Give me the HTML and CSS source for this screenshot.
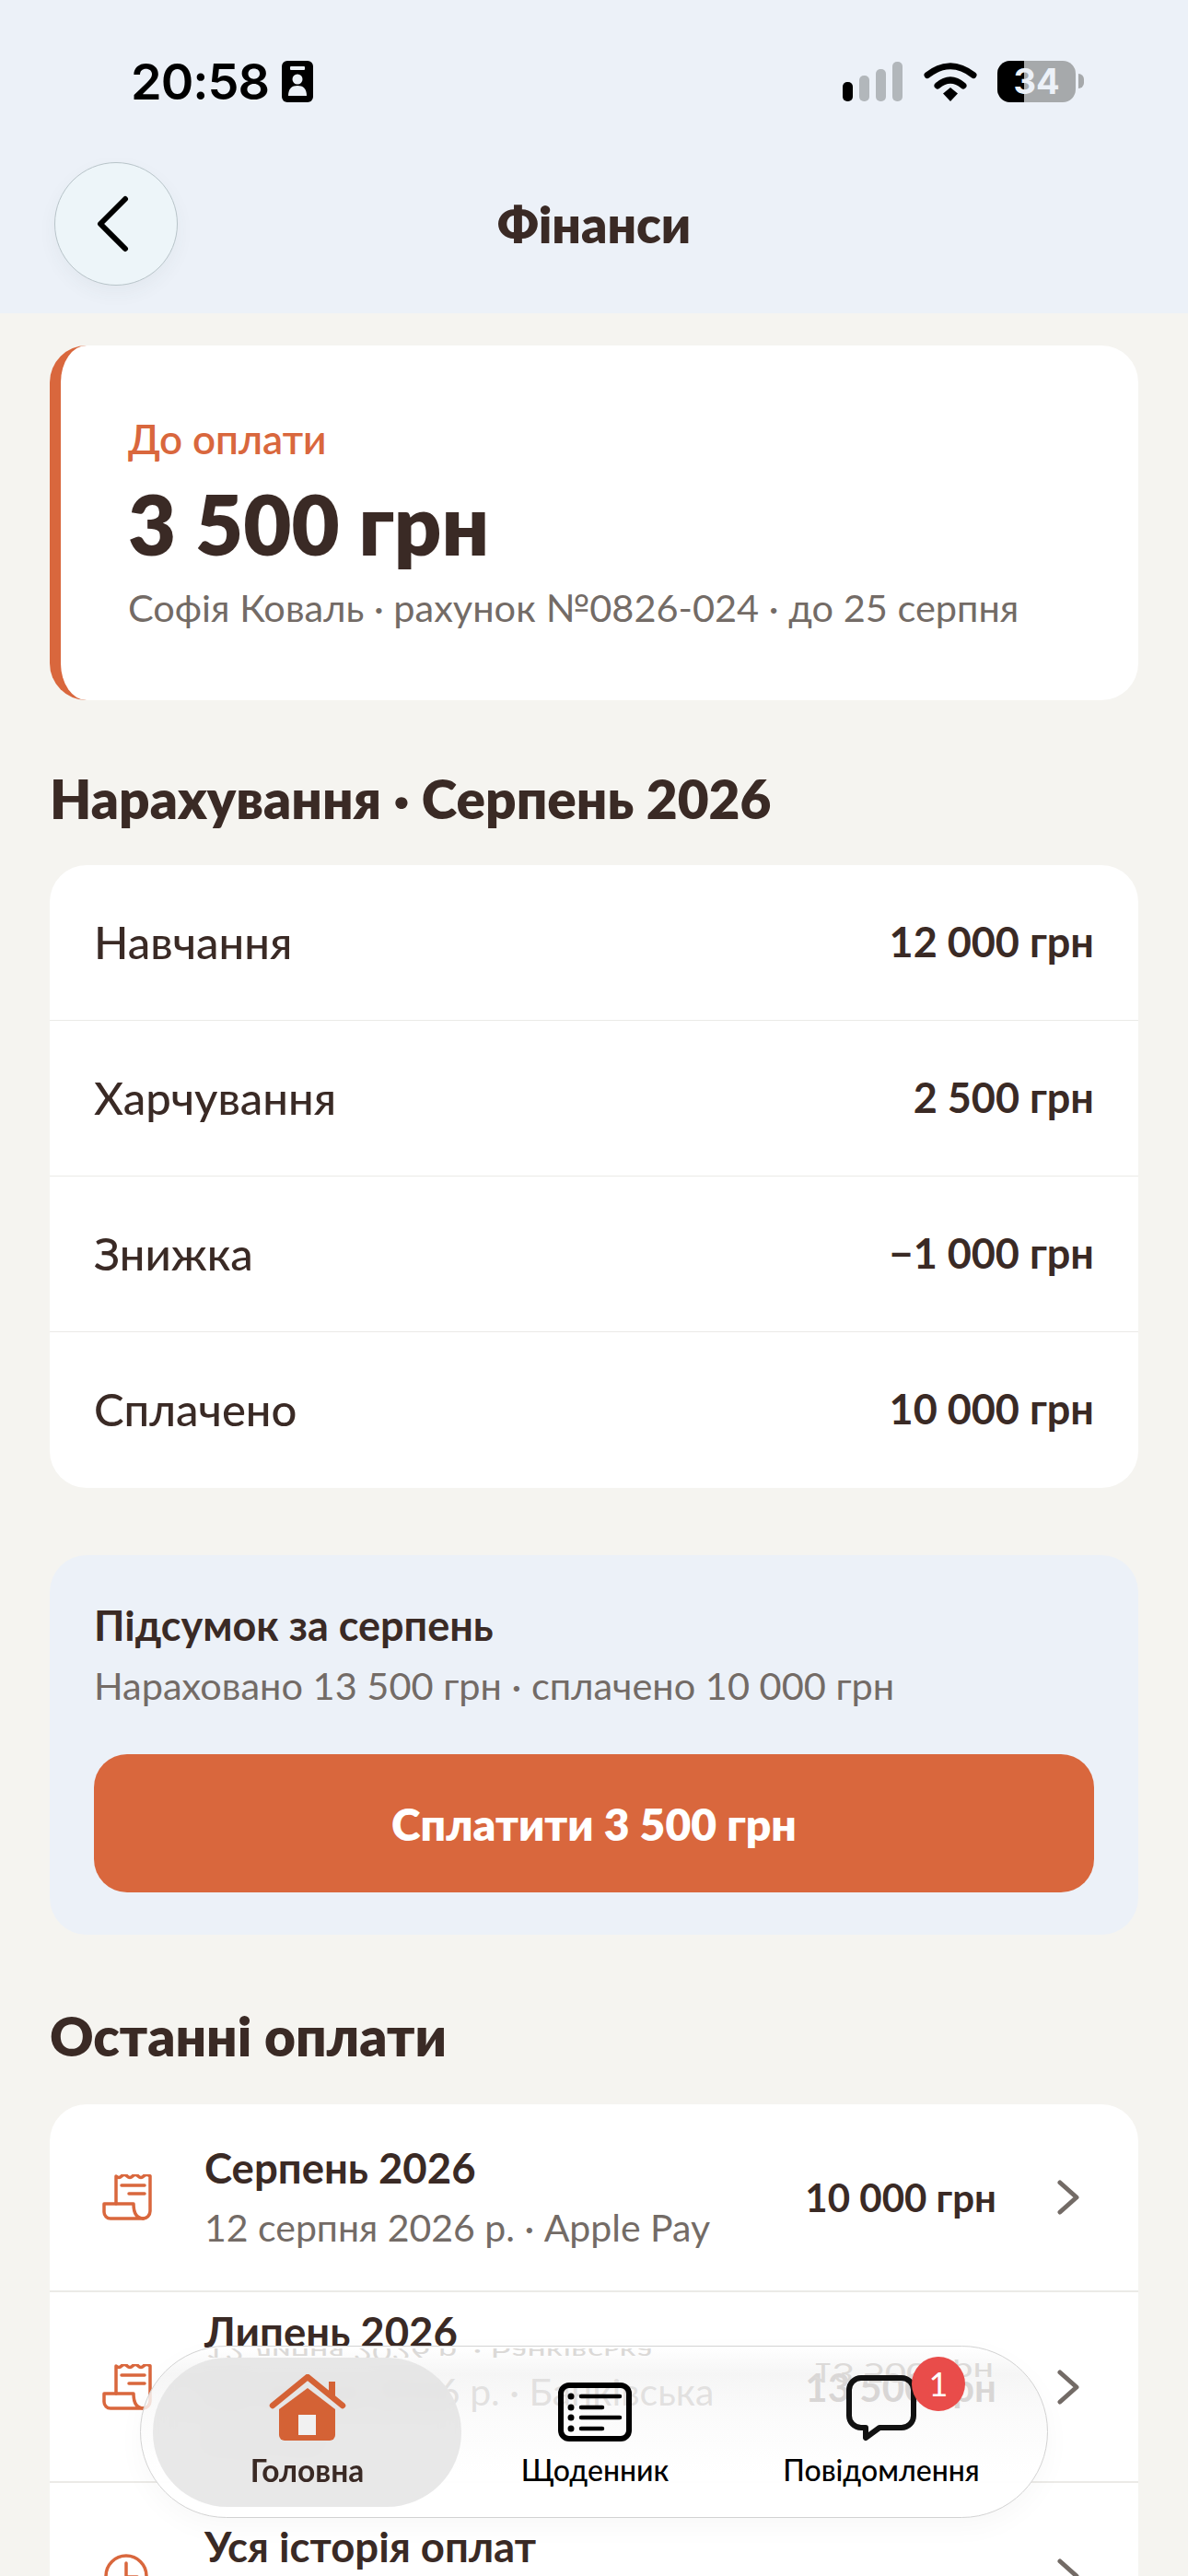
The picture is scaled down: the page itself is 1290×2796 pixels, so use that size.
FILE: index.html
```html
<!DOCTYPE html>
<html lang="uk">
<head>
  <meta charset="utf-8">
  <title>Фінанси</title>
  <link rel="stylesheet" href="styles.css">
</head>
<body>
  <header class="top">
    <div class="status">
      <div class="status-left">
        <span class="time">20:58</span>
        <svg class="focus" width="34" height="45" viewBox="0 0 34 45">
          <rect width="34" height="45" rx="6" fill="#000"/>
          <rect x="9" y="6" width="16" height="4" rx="1" fill="#ecf1f8"/>
          <circle cx="17" cy="20" r="5.5" fill="#ecf1f8"/>
          <path d="M7 38c0-8 4-11 10-11s10 3 10 11z" fill="#ecf1f8"/>
        </svg>
      </div>
      <div class="status-right">
        <div class="signal">
          <i class="bar bar1"></i><i class="bar bar2"></i><i class="bar bar3"></i><i class="bar bar4"></i>
        </div>
        <svg class="wifi" width="58" height="43" viewBox="0 0 58 43" fill="none" stroke="#000" stroke-width="7" stroke-linecap="round">
          <path d="M4 14.500Q29 -5 54 14.500"/>
          <path d="M15 26Q29 14 43 26"/>
          <path d="M21 34.500L29 28L37 34.500L29 43Z" fill="#000" stroke="none"/>
        </svg>
        <div class="battery"><span class="battery-fill"></span><span class="battery-num">34</span></div>
        <i class="battery-nub"></i>
      </div>
    </div>
    <div class="titlebar">
      <button class="back">
        <svg width="38" height="62" viewBox="0 0 38 62" fill="none" stroke="#000" stroke-width="6" stroke-linecap="round" stroke-linejoin="round"><path d="M33 4L6 31L33 58"/></svg>
      </button>
      <h1>Фінанси</h1>
    </div>
  </header>

  <main class="content">
    <section class="due">
      <div class="due-label">До оплати</div>
      <div class="due-sum">3 500 грн</div>
      <div class="due-info">Софія Коваль · рахунок №0826-024 · до 25 серпня</div>
    </section>

    <h2 class="section-title first">Нарахування · Серпень 2026</h2>
    <section class="card">
      <div class="line"><span>Навчання</span><b>12 000 грн</b></div>
      <div class="line"><span>Харчування</span><b>2 500 грн</b></div>
      <div class="line"><span>Знижка</span><b>−1 000 грн</b></div>
      <div class="line"><span>Сплачено</span><b>10 000 грн</b></div>
    </section>

    <section class="summary">
      <div class="summary-title">Підсумок за серпень</div>
      <div class="summary-info">Нараховано 13 500 грн · сплачено 10 000 грн</div>
      <button class="pay">Сплатити 3 500 грн</button>
    </section>

    <h2 class="section-title">Останні оплати</h2>
    <section class="card">
      <div class="pay-row">
        <svg class="row-icon" width="54" height="50" viewBox="0 0 54 50" fill="none" stroke="#d9673d" stroke-width="3.500" stroke-linecap="round" stroke-linejoin="round">
          <path d="M15 32V2q3 3 6 0t6 0t6 0t6 0t6 0t7 0V40a8 8 0 0 1-8 8"/>
          <path d="M2 32H34c0 9 3 16 11 16H9a7 7 0 0 1-7-7Z"/>
          <path d="M21 12H46M29 21H46"/>
        </svg>
        <div class="pay-text">
          <div class="pay-name">Серпень 2026</div>
          <div class="pay-info">12 серпня 2026 р. · Apple Pay</div>
        </div>
        <div class="pay-sum">10 000 грн</div>
        <svg class="chev" width="25" height="38" viewBox="0 0 25 38" fill="none" stroke="#736b66" stroke-width="5" stroke-linecap="round" stroke-linejoin="round"><path d="M3 3L21 19L3 35"/></svg>
      </div>
      <div class="pay-row">
        <svg class="row-icon" width="54" height="50" viewBox="0 0 54 50" fill="none" stroke="#d9673d" stroke-width="3.500" stroke-linecap="round" stroke-linejoin="round">
          <path d="M15 32V2q3 3 6 0t6 0t6 0t6 0t6 0t7 0V40a8 8 0 0 1-8 8"/>
          <path d="M2 32H34c0 9 3 16 11 16H9a7 7 0 0 1-7-7Z"/>
          <path d="M21 12H46M29 21H46"/>
        </svg>
        <div class="pay-text">
          <div class="pay-name">Липень 2026</div>
          <div class="pay-info">12 липня 2026 р. · Банківська картка</div>
        </div>
        <div class="pay-sum">13 500 грн</div>
        <svg class="chev" width="25" height="38" viewBox="0 0 25 38" fill="none" stroke="#736b66" stroke-width="5" stroke-linecap="round" stroke-linejoin="round"><path d="M3 3L21 19L3 35"/></svg>
      </div>
      <div class="pay-row">
        <svg class="row-icon" width="54" height="50" viewBox="0 0 54 50" fill="none" stroke="#d9673d" stroke-width="3.500" stroke-linecap="round" stroke-linejoin="round">
          <circle cx="26" cy="25" r="22"/>
          <path d="M26 11V26H38"/>
        </svg>
        <div class="pay-text">
          <div class="pay-name">Уся історія оплат</div>
          <div class="pay-info">Усі рахунки</div>
        </div>
        <svg class="chev" width="25" height="38" viewBox="0 0 25 38" fill="none" stroke="#736b66" stroke-width="5" stroke-linecap="round" stroke-linejoin="round"><path d="M3 3L21 19L3 35"/></svg>
      </div>
    </section>
  </main>

  <nav class="tabbar">
    <span class="mirror mirror-a">12 липня 2026 р. · Банківська</span>
    <span class="mirror mirror-b">13 500 грн</span>
    <a class="tab tab-active">
      <svg width="84" height="73" viewBox="0 0 84 73">
        <path d="M42 15L72 38V66a6 6 0 0 1-6 6H17a6 6 0 0 1-6-6V38Z" fill="#d46235"/>
        <rect x="32" y="44" width="19" height="22" fill="#f1f1f1"/>
        <rect x="65" y="8" width="7" height="16" fill="#d46235"/>
        <path d="M4 34L42 3L80 34" fill="none" stroke="#d46235" stroke-width="6.500" stroke-linecap="round" stroke-linejoin="round"/>
      </svg>
      <span>Головна</span>
    </a>
    <a class="tab">
      <svg width="80" height="64" viewBox="0 0 80 64" fill="none" stroke="#000" stroke-linecap="round">
        <rect x="3" y="3" width="74" height="58" rx="9" stroke-width="6"/>
        <path d="M25 15H67M25 27H48M25 38H67M25 50H48" stroke-width="4.500"/>
        <path d="M14 15h.01M14 27h.01M14 38h.01M14 50h.01" stroke-width="7"/>
      </svg>
      <span>Щоденник</span>
    </a>
    <a class="tab">
      <span class="chat">
        <svg width="76" height="72" viewBox="0 0 76 72" fill="none" stroke="#111" stroke-width="6" stroke-linejoin="round">
          <path d="M16 3H60a13 13 0 0 1 13 13V44a13 13 0 0 1-13 13H36L21 68V57H16A13 13 0 0 1 3 44V16A13 13 0 0 1 16 3Z"/>
        </svg>
        <b class="badge">1</b>
      </span>
      <span>Повідомлення</span>
    </a>
  </nav>
</body>
</html>
```

FILE: styles.css
```css
* {
  box-sizing: border-box;
}

html, body {
  margin: 0;
  padding: 0;
}

body {
  position: relative;
  height: 2796px;
  overflow: hidden;
  background-color: #f5f4f0;
  color: #3a2a25;
  font-family: Lato, "Noto Sans", Arial, sans-serif;
}

.top {
  height: 340px;
  background-color: #ecf1f8;
}

.status {
  display: flex;
  justify-content: space-between;
  align-items: center;
  height: 176px;
  padding: 0 113px 0 142px;
}

.status-left {
  display: flex;
  align-items: center;
  gap: 14px;
}

.time {
  font-family: Inter, sans-serif;
  font-size: 54px;
  font-weight: 600;
  color: #000;
  letter-spacing: -1px;
}

.status-right {
  display: flex;
  align-items: center;
}

.signal {
  display: flex;
  align-items: flex-end;
  gap: 7px;
  height: 43px;
  margin-right: 23px;
}

.bar {
  width: 11px;
  border-radius: 5px;
  background-color: #b2b7bb;
}

.bar1 { height: 21px; background-color: #000; }
.bar2 { height: 28px; }
.bar3 { height: 35px; }
.bar4 { height: 43px; }

.wifi {
  margin-right: 22px;
}

.battery {
  position: relative;
  display: flex;
  justify-content: center;
  align-items: center;
  width: 85px;
  height: 45px;
  border-radius: 14px;
  overflow: hidden;
  background-color: #a6a9ab;
}

.battery-fill {
  position: absolute;
  left: 0;
  top: 0;
  bottom: 0;
  width: 29px;
  background-color: #000;
}

.battery-num {
  position: relative;
  font-family: Inter, sans-serif;
  font-size: 38px;
  font-weight: 700;
  color: #ecf1f8;
}

.battery-nub {
  width: 6px;
  height: 16px;
  margin-left: 3px;
  border-radius: 0 6px 6px 0;
  background-color: #a6a9ab;
}

.titlebar {
  display: grid;
  grid-template-columns: 1fr auto 1fr;
  align-items: center;
  height: 134px;
  padding: 0 59px;
}

.back {
  display: flex;
  justify-content: center;
  align-items: center;
  width: 134px;
  height: 134px;
  padding: 0 8px 0 0;
  border: 1px solid #b8c4c9;
  border-radius: 50%;
  background-color: #edf5f9;
  box-shadow: 0 8px 20px rgba(60, 70, 80, 0.05);
}

h1 {
  margin: 0;
  font-size: 55px;
  font-weight: 800;
  line-height: 58px;
}

.content {
  padding: 35px 54px 0;
}

.due {
  height: 385px;
  padding: 76px 0 0 73px;
  border-left: 12px solid #d9673d;
  border-radius: 40px;
  background-color: #fff;
}

.due-label {
  font-size: 44px;
  font-weight: 600;
  line-height: 50px;
  color: #d9673d;
}

.due-sum {
  margin-top: 17px;
  font-size: 90px;
  font-weight: 800;
  line-height: 100px;
}

.due-info {
  margin-top: 16px;
  font-size: 41.500px;
  line-height: 50px;
  color: #736b66;
}

.section-title {
  margin: 0;
  padding: 77px 0 43px;
  font-size: 58.500px;
  font-weight: 800;
  line-height: 64px;
}

.section-title.first {
  padding: 74px 0 41px;
}

.card {
  overflow: hidden;
  border-radius: 40px;
  background-color: #fff;
}

.line {
  display: flex;
  justify-content: space-between;
  align-items: center;
  height: 169px;
  padding: 0 48px 3px;
  font-size: 49px;
  font-weight: 500;
  border-bottom: 1px solid #ebeae7;
}

.line:last-child {
  border-bottom: none;
}

.line b {
  font-size: 45px;
  font-weight: 700;
}

.summary {
  margin-top: 73px;
  height: 412px;
  padding: 50px 48px 0;
  border-radius: 40px;
  background-color: #ecf1f8;
}

.summary-title {
  font-size: 45px;
  font-weight: 700;
  line-height: 52px;
}

.summary-info {
  margin-top: 14px;
  font-size: 41.500px;
  line-height: 50px;
  color: #736b66;
}

.pay {
  display: block;
  width: 100%;
  height: 150px;
  margin-top: 50px;
  border: none;
  border-radius: 36px;
  background-color: #d9673d;
  color: #fff;
  font-family: inherit;
  font-size: 48px;
  font-weight: 800;
}

.pay-row {
  display: flex;
  align-items: center;
  min-height: 204px;
  padding: 15px 63px 15px 57px;
  border-bottom: 2px solid #ebeae7;
}

.row-icon {
  flex: none;
  margin-right: 57px;
}

.pay-text {
  flex: 1;
  min-width: 0;
}

.pay-name {
  font-size: 45.500px;
  font-weight: 700;
  line-height: 56px;
}

.pay-info {
  margin-top: 9px;
  width: 600px;
  font-size: 41px;
  line-height: 55px;
  color: #736b66;
}

.pay-sum {
  flex: none;
  margin-right: 66px;
  font-size: 42px;
  font-weight: 700;
}

.chev {
  flex: none;
}

.tabbar {
  position: absolute;
  left: 152px;
  top: 2546px;
  display: grid;
  grid-template-columns: 335px 290px 332px;
  width: 986px;
  height: 187px;
  padding: 12px 0 0 13px;
  border: 1px solid #d2d2d2;
  border-radius: 94px;
  overflow: hidden;
  background: linear-gradient(180deg, rgba(255, 255, 255, 0.96) 0, rgba(244, 244, 244, 0.86) 16%, rgba(250, 250, 250, 0.82) 40%, rgba(255, 255, 255, 0.96) 75%);
  box-shadow: 0 10px 30px rgba(0, 0, 0, 0.03);
}

.mirror {
  position: absolute;
  top: 0;
  height: 14px;
  overflow: hidden;
  font-size: 36px;
  line-height: 14px;
  color: #dbd9d7;
  transform: scaleY(-0.7);
  white-space: nowrap;
}

.mirror-a { left: 70px; }
.mirror-b { left: 728px; top: 8px; height: 40px; font-size: 40px; line-height: 40px; color: #dcdad8; }

.tab {
  display: flex;
  flex-direction: column;
  justify-content: flex-end;
  align-items: center;
  gap: 11px;
  height: 162px;
  padding-bottom: 20px;
  color: #000;
  font-size: 32px;
  font-weight: 500;
  line-height: 40px;
}

.tab-active {
  border-radius: 81px;
  background-color: rgba(226, 226, 226, 0.78);
  color: #3a2a25;
  font-size: 33.500px;
  font-weight: 700;
  -webkit-backdrop-filter: blur(10px);
  backdrop-filter: blur(10px);
}

.chat {
  position: relative;
  display: block;
  height: 72px;
}

.badge {
  position: absolute;
  left: 71px;
  top: -20px;
  width: 58px;
  height: 59px;
  border-radius: 50%;
  background-color: #e94c4a;
  color: #fff;
  font-size: 36px;
  font-weight: 400;
  line-height: 59px;
  text-align: center;
}
```
